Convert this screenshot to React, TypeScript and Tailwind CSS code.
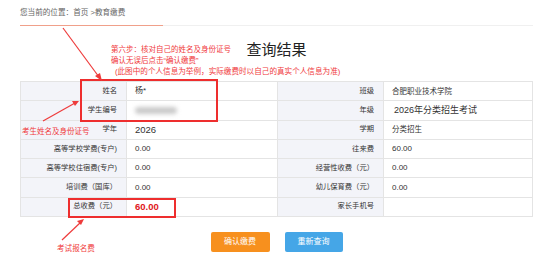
import React from 'react';

type Cell = { label: string; value: React.ReactNode };

const rows: [Cell, Cell][] = [
  [
    { label: '姓名', value: <span className="text-[8px]">杨*</span> },
    { label: '班级', value: <span className="text-[7.5px]">合肥职业技术学院</span> },
  ],
  [
    {
      label: '学生编号',
      value: <span className="block w-[42px] h-[7px] rounded-full bg-[#c9c9c9] blur-[2px]" />,
    },
    { label: '年级', value: <span className="text-[9px] pl-[2px]">2026年分类招生考试</span> },
  ],
  [
    { label: '学年', value: <span className="text-[9.5px]">2026</span> },
    { label: '学期', value: <span className="text-[7.5px]">分类招生</span> },
  ],
  [
    { label: '高等学校学费(专户)', value: <span className="text-[8px]">0.00</span> },
    { label: '往来费', value: <span className="text-[8px]">60.00</span> },
  ],
  [
    { label: '高等学校住宿费(专户)', value: <span className="text-[8px]">0.00</span> },
    { label: '经营性收费（元）', value: <span className="text-[8px]">0.00</span> },
  ],
  [
    { label: '培训费（国库）', value: <span className="text-[8px]">0.00</span> },
    { label: '幼儿保育费（元）', value: <span className="text-[8px]">0.00</span> },
  ],
  [
    {
      label: '总收费（元）',
      value: <span className="text-[9.5px] font-bold text-[#e0161b]">60.00</span>,
    },
    { label: '家长手机号', value: '' },
  ],
];

const Label: React.FC<{ text: string }> = ({ text }) => (
  <div className="h-[19.3px] flex items-center justify-end pr-[9px] bg-[#f3f4f9] border-b border-r border-[#e4e4e4] text-[7.3px] text-[#333]">
    {text}
  </div>
);

const Value: React.FC<{ children: React.ReactNode; last?: boolean }> = ({ children, last }) => (
  <div
    className={`h-[19.3px] flex items-center pl-[8px] border-b border-[#e4e4e4] text-[#333] ${
      last ? '' : 'border-r'
    }`}
  >
    {children}
  </div>
);

const App: React.FC = () => {
  return (
    <div
      className="relative w-[553px] h-[265px] bg-white overflow-hidden"
      style={{ fontFamily: '"Liberation Sans", "Noto Sans CJK SC", sans-serif' }}
    >
      <div className="px-[20px]">
        {/* 面包屑 */}
        <div className="h-[25px] flex items-center text-[7.6px] text-[#666]">
          您当前的位置：首页 &gt;教育缴费
        </div>
        <div className="h-px bg-[#f0f0f0]">
          <div className="w-[143px] h-px bg-[#f0a08a]" />
        </div>

        <h1 className="mt-[14px] h-[20px] leading-[20px] text-center text-[15px] text-[#222]">
          查询结果
        </h1>

        {/* 信息表 */}
        <div className="mt-[21px] grid grid-cols-[106px_151px_106px_148px] border-t border-l border-r border-[#e4e4e4]">
          {rows.map(([a, b], i) => (
            <React.Fragment key={i}>
              <Label text={a.label} />
              <Value>{a.value}</Value>
              <Label text={b.label} />
              <Value last>{b.value}</Value>
            </React.Fragment>
          ))}
        </div>

        <div className="mt-[15px] flex justify-center gap-[15px]">
          <button className="w-[59px] h-[20px] rounded-[2px] bg-[#f7901e] text-white text-[8px]">
            确认缴费
          </button>
          <button className="w-[58px] h-[20px] rounded-[2px] bg-[#45a6e7] text-white text-[8px]">
            重新查询
          </button>
        </div>
      </div>

      {/* 标注 */}
      <div className="absolute left-[111px] top-[44px] text-[7.5px] leading-[11px] text-[#f0393c]">
        <div>第六步：核对自己的姓名及身份证号</div>
        <div>确认无误后点击“确认缴费”</div>
        <div className="pl-[4px] text-[7.6px]">(此图中的个人信息为举例，实际缴费时以自己的真实个人信息为准)</div>
      </div>
      <div className="absolute left-[22px] top-[126px] text-[7.5px] text-[#f0393c]">
        考生姓名及身份证号
      </div>
      <div className="absolute left-[57px] top-[243px] text-[7.6px] text-[#f0393c]">考试报名费</div>

      <div className="absolute left-[80px] top-[79px] w-[138px] h-[43px] border-2 border-[#ee2e2e]" />
      <div className="absolute left-[68px] top-[198px] w-[108px] h-[20px] border-2 border-[#ee2e2e]" />

      <svg className="absolute inset-0 pointer-events-none" width="553" height="265">
        <g stroke="#ee3b3b" strokeWidth="1.2" fill="#ee3b3b">
          <line x1="63" y1="28" x2="99" y2="77" />
          <polygon points="102,81 95,76 100,73" stroke="none" />
          <line x1="43" y1="121" x2="75" y2="103" />
          <polygon points="79,101 72,101 75,106" stroke="none" />
          <line x1="62" y1="240" x2="81" y2="222" />
          <polygon points="84,219 77,221 81,225" stroke="none" />
        </g>
      </svg>
    </div>
  );
};

export default App;
